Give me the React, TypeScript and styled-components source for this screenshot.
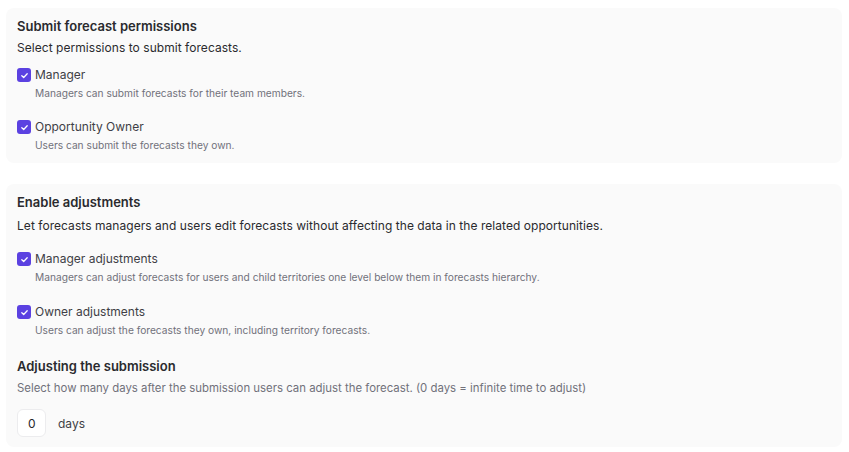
import React, { useState } from "react";
import styled, { createGlobalStyle } from "styled-components";

const GlobalStyle = createGlobalStyle`
  * { box-sizing: border-box; }
  body {
    margin: 0;
    background: #ffffff;
    font-family: Inter, "Noto Sans", "Liberation Sans", sans-serif;
    color: #27272a;
  }
`;

const Page = styled.div`
  padding: 8px 7px 8px 6px;
  display: flex;
  flex-direction: column;
  gap: 21px;
`;

const Card = styled.section<{ $bottom: number }>`
  background: #fafafa;
  border-radius: 8px;
  padding: 10px 11px ${(p) => p.$bottom}px 11px;
  display: flex;
  flex-direction: column;
`;

const Title = styled.h2<{ $top?: number }>`
  margin: ${(p) => p.$top ?? 0}px 0 0;
  font-size: 13px;
  line-height: 16px;
  font-weight: 600;
  color: #2a2a2e;
`;

const Lead = styled.p<{ $top: number }>`
  margin: ${(p) => p.$top}px 0 0;
  font-size: 12px;
  letter-spacing: 0.05px;
  line-height: 16px;
  color: #2a2a2e;
`;

const Hint = styled.p`
  margin: 6px 0 0;
  font-size: 11.4px;
  line-height: 16px;
  color: #71717a;
`;

const Options = styled.div<{ $top: number; $gap: number }>`
  margin-top: ${(p) => p.$top}px;
  display: flex;
  flex-direction: column;
  gap: ${(p) => p.$gap}px;
`;

const Option = styled.div`
  display: flex;
  flex-direction: column;
`;

const OptionRow = styled.label`
  display: flex;
  align-items: center;
  gap: 4px;
  cursor: pointer;
`;

const Box = styled.span<{ $on: boolean }>`
  width: 14px;
  height: 14px;
  border-radius: 3px;
  background: ${(p) => (p.$on ? "#5b41e1" : "#ffffff")};
  border: ${(p) => (p.$on ? "none" : "1px solid #d4d4d8")};
  display: inline-flex;
  align-items: center;
  justify-content: center;
  flex-shrink: 0;
`;

const OptionLabel = styled.span`
  font-size: 12px;
  line-height: 16px;
  color: #3f3f46;
`;

const OptionDesc = styled.span`
  margin: 3px 0 0 18px;
  font-size: 10.2px;
  line-height: 14px;
  color: #71717a;
`;

const DaysRow = styled.div`
  margin-top: 13px;
  display: flex;
  align-items: center;
  gap: 12px;
`;

const DaysInput = styled.input`
  width: 29px;
  height: 28px;
  border: 1px solid #ececee;
  border-radius: 6px;
  background: #ffffff;
  padding: 0 0 0 10px;
  font-family: inherit;
  font-size: 12px;
  color: #27272a;
  outline: none;
`;

const DaysLabel = styled.span`
  font-size: 12px;
  color: #3f3f46;
`;

function Check({
  label,
  desc,
  defaultOn = true,
}: {
  label: string;
  desc: string;
  defaultOn?: boolean;
}) {
  const [on, setOn] = useState(defaultOn);
  return (
    <Option>
      <OptionRow onClick={() => setOn(!on)}>
        <Box $on={on}>
          {on && (
            <svg width="9" height="9" viewBox="0 0 10 10" fill="none">
              <path
                d="M2 5.2 L4.1 7.2 L8 3"
                stroke="#ffffff"
                strokeWidth="1.4"
                strokeLinecap="round"
                strokeLinejoin="round"
              />
            </svg>
          )}
        </Box>
        <OptionLabel>{label}</OptionLabel>
      </OptionRow>
      <OptionDesc>{desc}</OptionDesc>
    </Option>
  );
}

export default function App() {
  const [days, setDays] = useState("0");
  return (
    <>
      <GlobalStyle />
      <Page>
        <Card $bottom={11}>
          <Title>Submit forecast permissions</Title>
          <Lead $top={6}>Select permissions to submit forecasts.</Lead>
          <Options $top={11} $gap={19}>
            <Check
              label="Manager"
              desc="Managers can submit forecasts for their team members."
            />
            <Check
              label="Opportunity Owner"
              desc="Users can submit the forecasts they own."
            />
          </Options>
        </Card>

        <Card $bottom={10}>
          <Title>Enable adjustments</Title>
          <Lead $top={8}>
            Let forecasts managers and users edit forecasts without affecting the
            data in the related opportunities.
          </Lead>
          <Options $top={17} $gap={20}>
            <Check
              label="Manager adjustments"
              desc="Managers can adjust forecasts for users and child territories one level below them in forecasts hierarchy."
            />
            <Check
              label="Owner adjustments"
              desc="Users can adjust the forecasts they own, including territory forecasts."
            />
          </Options>
          <Title $top={21}>Adjusting the submission</Title>
          <Hint>
            Select how many days after the submission users can adjust the
            forecast. (0 days = infinite time to adjust)
          </Hint>
          <DaysRow>
            <DaysInput value={days} onChange={(e) => setDays(e.target.value)} />
            <DaysLabel>days</DaysLabel>
          </DaysRow>
        </Card>
      </Page>
    </>
  );
}
